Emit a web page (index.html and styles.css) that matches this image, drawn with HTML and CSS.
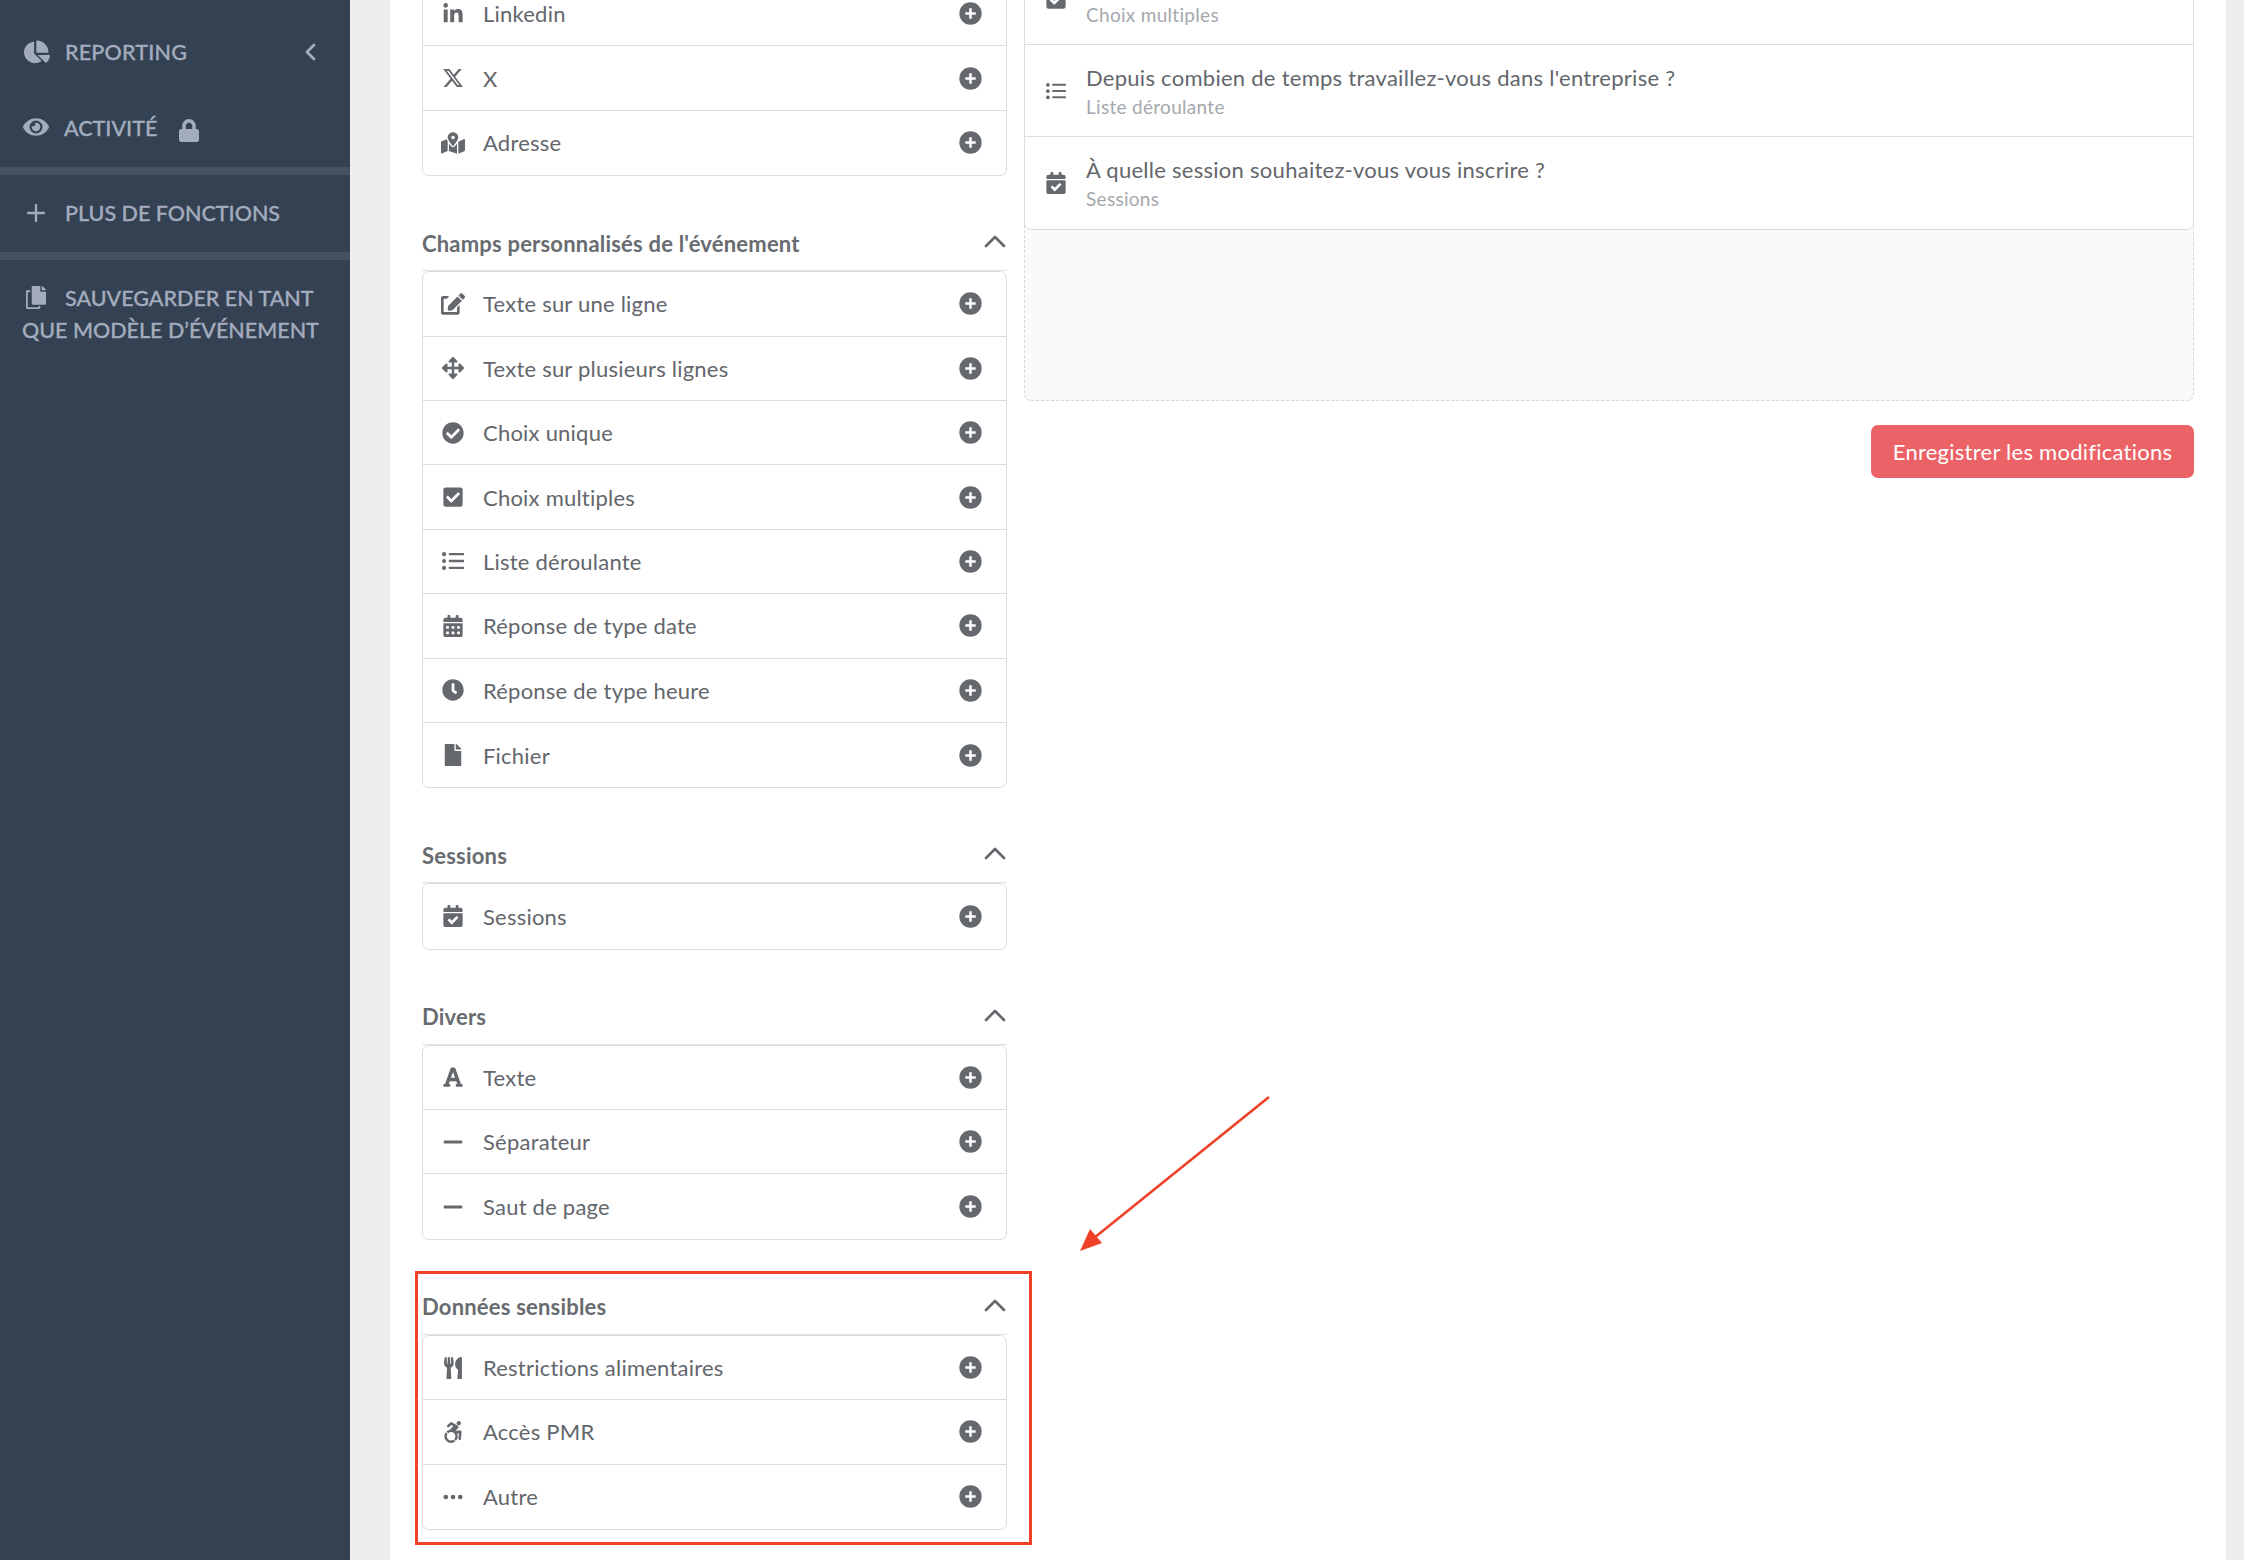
FILE: index.html
```html
<!DOCTYPE html>
<html lang="fr">
<head>
<meta charset="utf-8">
<title>Formulaire</title>
<link rel="stylesheet" href="styles.css">
</head>
<body>
<svg class="sprite" xmlns="http://www.w3.org/2000/svg">
<symbol id="i-plus" viewBox="0 0 512 512"><circle cx="256" cy="256" r="248"/><path class="cross" d="M228 140h56v88h88v56h-88v88h-56v-88h-88v-56h88z"/></symbol>
<symbol id="i-linkedin" viewBox="0 0 448 512"><path d="M100.28 448H7.4V148.9h92.88zM53.79 108.1C24.09 108.1 0 83.5 0 53.8a53.79 53.79 0 0 1 107.58 0c0 29.7-24.1 54.3-53.79 54.3zM447.9 448h-92.68V302.4c0-34.7-.7-79.2-48.29-79.2-48.29 0-55.69 37.7-55.69 76.7V448h-92.78V148.9h89.08v40.8h1.3c12.4-23.5 42.69-48.3 87.88-48.3 94 0 111.28 61.9 111.28 142.3V448z"/></symbol>
<symbol id="i-x" viewBox="0 0 512 512"><path d="M389.2 48h70.6L305.6 224.2 487 464H345L233.7 318.6 106.5 464H35.8L200.7 275.5 26.8 48H172.4L272.9 180.9 389.2 48zM364.4 421.8h39.1L151.1 88h-42L364.4 421.8z"/></symbol>
<symbol id="i-map" viewBox="0 0 576 512"><path d="M288 0c-69.59 0-126 56.41-126 126 0 56.26 82.35 158.8 113.9 196.02 6.39 7.54 17.82 7.54 24.2 0C331.65 284.8 414 182.26 414 126 414 56.41 357.59 0 288 0zm0 168c-23.2 0-42-18.8-42-42s18.8-42 42-42 42 18.8 42 42-18.8 42-42 42zM20.12 215.95A32.006 32.006 0 0 0 0 245.66v250.32c0 11.32 11.43 19.06 21.94 14.86L160 448V214.92c-8.84-15.98-16.07-31.54-21.25-46.42L20.12 215.95zM288 359.67c-14.07 0-27.38-6.18-36.51-16.96-19.66-23.2-40.57-49.62-59.49-76.72V448l192 64V266c-18.92 27.09-39.82 53.52-59.49 76.72-9.13 10.77-22.44 16.95-36.51 16.95zm266.06-198.51L416 224v288l139.88-55.95A31.996 31.996 0 0 0 576 426.34V176.02c0-11.32-11.43-19.06-21.94-14.86z"/></symbol>
<symbol id="i-edit" viewBox="0 0 576 512"><path d="M402.6 83.2l90.2 90.2c3.8 3.8 3.8 10 0 13.8L274.4 405.6l-92.8 10.3c-12.4 1.4-22.9-9.1-21.5-21.5l10.3-92.8L388.8 83.2c3.8-3.8 10-3.8 13.8 0zm162-22.9l-48.8-48.8c-15.2-15.2-39.9-15.2-55.2 0l-35.4 35.4c-3.8 3.8-3.8 10 0 13.8l90.2 90.2c3.8 3.8 10 3.8 13.8 0l35.4-35.4c15.2-15.3 15.2-40 0-55.2zM384 346.2V448H64V128h73.1c3.2 0 6.2-1.3 8.5-3.5l40-40c7.6-7.6 2.2-20.5-8.5-20.5H48C21.5 64 0 85.5 0 112v352c0 26.5 21.5 48 48 48h352c26.5 0 48-21.5 48-48V306.2c0-10.7-12.9-16-20.5-8.5l-40 40c-2.2 2.3-3.5 5.3-3.5 8.5z"/></symbol>
<symbol id="i-move" viewBox="0 0 512 512"><path d="M352.201 425.775l-79.196 79.196c-9.373 9.373-24.568 9.373-33.941 0l-79.196-79.196c-15.119-15.119-4.411-40.971 16.971-40.97h51.162L228 284H127.196v51.162c0 21.382-25.851 32.09-40.971 16.971L7.029 272.937c-9.373-9.373-9.373-24.569 0-33.941L86.225 159.8c15.119-15.119 40.971-4.411 40.971 16.971V228H228V127.196h-51.23c-21.382 0-32.09-25.851-16.971-40.971l79.196-79.196c9.373-9.373 24.568-9.373 33.941 0l79.196 79.196c15.119 15.119 4.411 40.971-16.971 40.971h-51.162V228h100.804v-51.162c0-21.382 25.851-32.09 40.97-16.971l79.196 79.196c9.373 9.373 9.373 24.569 0 33.941L425.773 352.2c-15.119 15.119-40.971 4.411-40.97-16.971V284H284v100.804h51.23c21.382 0 32.09 25.851 16.971 40.971z"/></symbol>
<symbol id="i-check-circle" viewBox="0 0 512 512"><path d="M504 256c0 136.967-111.033 248-248 248S8 392.967 8 256 119.033 8 256 8s248 111.033 248 248zM227.314 387.314l184-184c6.248-6.248 6.248-16.379 0-22.627l-22.627-22.627c-6.248-6.249-16.379-6.249-22.628 0L216 308.118l-70.059-70.059c-6.248-6.248-16.379-6.248-22.628 0l-22.627 22.627c-6.248 6.248-6.248 16.379 0 22.627l104 104c6.249 6.249 16.379 6.249 22.628.001z"/></symbol>
<symbol id="i-check-square" viewBox="0 0 448 512"><path d="M400 480H48c-26.51 0-48-21.49-48-48V80c0-26.51 21.49-48 48-48h352c26.51 0 48 21.49 48 48v352c0 26.51-21.49 48-48 48zm-204.686-98.059l184-184c6.248-6.248 6.248-16.379 0-22.627l-22.627-22.627c-6.248-6.248-16.379-6.249-22.628 0L184 302.745l-70.059-70.059c-6.248-6.248-16.379-6.248-22.628 0l-22.627 22.627c-6.248 6.248-6.248 16.379 0 22.627l104 104c6.249 6.25 16.379 6.25 22.628 0z"/></symbol>
<symbol id="i-list" viewBox="0 0 512 512"><circle cx="48" cy="96" r="48"/><circle cx="48" cy="256" r="48"/><circle cx="48" cy="416" r="48"/><rect x="160" y="68" width="352" height="56" rx="12"/><rect x="160" y="228" width="352" height="56" rx="12"/><rect x="160" y="388" width="352" height="56" rx="12"/></symbol>
<symbol id="i-cal" viewBox="0 0 448 512"><path d="M0 464c0 26.5 21.5 48 48 48h352c26.5 0 48-21.5 48-48V192H0v272zm320-196c0-6.6 5.4-12 12-12h40c6.6 0 12 5.4 12 12v40c0 6.6-5.4 12-12 12h-40c-6.6 0-12-5.4-12-12v-40zm0 128c0-6.6 5.4-12 12-12h40c6.6 0 12 5.4 12 12v40c0 6.6-5.4 12-12 12h-40c-6.6 0-12-5.4-12-12v-40zM192 268c0-6.6 5.4-12 12-12h40c6.6 0 12 5.4 12 12v40c0 6.6-5.4 12-12 12h-40c-6.6 0-12-5.4-12-12v-40zm0 128c0-6.6 5.4-12 12-12h40c6.6 0 12 5.4 12 12v40c0 6.6-5.4 12-12 12h-40c-6.6 0-12-5.4-12-12v-40zM64 268c0-6.6 5.4-12 12-12h40c6.6 0 12 5.4 12 12v40c0 6.6-5.4 12-12 12H76c-6.6 0-12-5.4-12-12v-40zm0 128c0-6.6 5.4-12 12-12h40c6.6 0 12 5.4 12 12v40c0 6.6-5.4 12-12 12H76c-6.6 0-12-5.4-12-12v-40zM400 64h-48V16c0-8.8-7.2-16-16-16h-32c-8.8 0-16 7.2-16 16v48H160V16c0-8.8-7.2-16-16-16h-32c-8.8 0-16 7.2-16 16v48H48C21.5 64 0 85.5 0 112v48h448v-48c0-26.5-21.5-48-48-48z"/></symbol>
<symbol id="i-clock" viewBox="0 0 512 512"><path d="M256,8C119,8,8,119,8,256S119,504,256,504,504,393,504,256,393,8,256,8Zm92.49,313h0l-20,25a16,16,0,0,1-22.49,2.5h0l-67-49.72a40,40,0,0,1-15-31.23V112a16,16,0,0,1,16-16h32a16,16,0,0,1,16,16V256l58,42.5A16,16,0,0,1,348.49,321Z"/></symbol>
<symbol id="i-file" viewBox="0 0 384 512"><path d="M224 136V0H24C10.7 0 0 10.7 0 24v464c0 13.3 10.7 24 24 24h336c13.3 0 24-10.7 24-24V160H248c-13.2 0-24-10.8-24-24zm160-14.1v6.1H256V0h6.1c6.4 0 12.5 2.5 17 7l97.9 98c4.5 4.5 7 10.6 7 16.9z"/></symbol>
<symbol id="i-calcheck" viewBox="0 0 448 512"><path d="M436 160H12c-6.627 0-12-5.373-12-12v-36c0-26.51 21.49-48 48-48h48V12c0-6.627 5.373-12 12-12h40c6.627 0 12 5.373 12 12v52h128V12c0-6.627 5.373-12 12-12h40c6.627 0 12 5.373 12 12v52h48c26.51 0 48 21.49 48 48v36c0 6.627-5.373 12-12 12zM12 192h424c6.627 0 12 5.373 12 12v260c0 26.51-21.49 48-48 48H48c-26.51 0-48-21.49-48-48V204c0-6.627 5.373-12 12-12zm333.296 95.947l-28.169-28.398c-4.667-4.705-12.265-4.736-16.97-.068L194.12 364.665l-45.98-46.352c-4.667-4.705-12.266-4.736-16.971-.068l-28.397 28.17c-4.705 4.667-4.736 12.265-.068 16.97l82.601 83.269c4.667 4.705 12.265 4.736 16.97.068l142.953-141.805c4.705-4.667 4.736-12.265.068-16.97z"/></symbol>
<symbol id="i-font" viewBox="0 0 448 512"><path d="M432 416h-23.41L277.88 53.69A32 32 0 0 0 247.58 32h-47.16a32 32 0 0 0-30.3 21.69L39.41 416H16a16 16 0 0 0-16 16v32a16 16 0 0 0 16 16h128a16 16 0 0 0 16-16v-32a16 16 0 0 0-16-16h-19.58l23.3-64h152.56l23.3 64H304a16 16 0 0 0-16 16v32a16 16 0 0 0 16 16h128a16 16 0 0 0 16-16v-32a16 16 0 0 0-16-16zM176.85 272L224 142.51 271.15 272z"/></symbol>
<symbol id="i-minus" viewBox="0 0 448 512"><rect x="8" y="220" width="432" height="72" rx="24"/></symbol>
<symbol id="i-utensils" viewBox="0 0 416 512"><path d="M207.9 15.2c.8 4.7 16.1 94.5 16.1 128.8 0 52.3-27.8 89.6-68.9 104.6L168 486.7c.7 13.7-10.2 25.3-24 25.3H80c-13.7 0-24.7-11.5-24-25.3l12.9-238.1C27.7 233.6 0 196.2 0 144 0 109.6 15.3 19.9 16.1 15.2 19.3-5.1 61.4-5.4 64 16.3v141.2c1.3 3.4 15.1 3.2 16 0 1.4-25.3 7.9-139.2 8-141.8 3.3-20.8 44.7-20.8 47.9 0 .2 2.7 6.6 116.5 8 141.8.9 3.2 14.8 3.4 16 0V16.3c2.6-21.6 44.8-21.4 48-1.1zm119.2 285.7l-15 185.1c-1.2 14 9.9 26 23.9 26h56c13.3 0 24-10.7 24-24V24c0-13.2-10.7-24-24-24-82.5 0-221.4 178.5-64.9 300.9z"/></symbol>
<symbol id="i-access" viewBox="0 0 448 512"><path d="M423.9 255.8L411 413.1c-3.3 40.7-63.9 35.1-60.6-4.9l10-122.5-41.1 2.3c10.1 20.7 15.8 43.9 15.8 68.5 0 41.2-16.1 78.7-42.3 106.5l-39.3-39.3c57.9-63.7 13.1-167.2-74-167.2-25.9 0-49.5 9.9-67.2 26L73 243.2c22-20.7 50.1-35.1 81.4-40.2l75.3-85.7-42.6-24.8-51.6 46c-30 26.8-70.6-18.5-40.5-45.4l68-60.7c9.8-8.8 24.1-10.2 35.5-3.6 0 0 139.3 80.9 139.5 81.1 16.2 10.1 20.7 36 6.1 52.6L285.7 229l106.1-5.9c18.5-1.1 33.6 14.4 32.1 32.7zm-64.9-154c28.1 0 50.9-22.8 50.9-50.9C409.9 22.8 387.1 0 359 0c-28.1 0-50.9 22.8-50.9 50.9 0 28.1 22.8 50.9 50.9 50.9zM179.6 456.5c-80.6 0-127.4-90.6-82.7-156.1l-39.7-39.7C36.4 287 24 320.3 24 356.4c0 130.7 150.7 201.4 251.4 122.5l-39.7-39.7c-16 10.9-35.3 17.3-56.1 17.3z"/></symbol>
<symbol id="i-dots" viewBox="0 0 512 512"><circle cx="72" cy="256" r="60"/><circle cx="256" cy="256" r="60"/><circle cx="440" cy="256" r="60"/></symbol>
<symbol id="i-chevron-up" viewBox="0 0 22 14"><path d="M2 12 L11 3 L20 12" fill="none" stroke="currentColor" stroke-width="2.7" stroke-linecap="round" stroke-linejoin="round"/></symbol>
<symbol id="i-chevron-left" viewBox="0 0 12 18"><path d="M10 2 L3 9 L10 16" fill="none" stroke="currentColor" stroke-width="2.8" stroke-linecap="round" stroke-linejoin="round"/></symbol>
<symbol id="i-pie" viewBox="0 0 576 512"><path d="M558.65 320H303.15l170.2 170.2c6.5 6.5 17.2 7 23.9.7 41.7-39.3 70.3-92.2 78.7-151.7 1.5-10.2-6.7-19.2-17.3-19.2zM543.9 256C535 115.2 426.8 7.4 291.6.5c-9.4-.5-17.6 7.2-17.6 16.6V272h253.1c9.4 0 17.4-6.6 16.8-16zM224 288V47.2c0-10.6-9-18.8-19.4-17.3C85.3 46.8-5.1 150.4.2 274.4c5.4 127.4 115.1 231.9 242.6 229.6 50.1-.9 96.4-17 134.5-43.7 7.9-5.5 8.4-17.2 1.6-24L224 288z"/></symbol>
<symbol id="i-eye" viewBox="0 0 576 512"><path d="M572.52 241.4C518.29 135.59 410.93 64 288 64S57.68 135.64 3.48 241.41a32.35 32.35 0 0 0 0 29.19C57.71 376.41 165.07 448 288 448s230.32-71.64 284.52-177.41a32.35 32.35 0 0 0 0-29.19zM288 400a144 144 0 1 1 144-144 143.93 143.93 0 0 1-144 144zm0-240a95.31 95.31 0 0 0-25.31 3.79 47.85 47.85 0 0 1-66.9 66.9A95.78 95.78 0 1 0 288 160z"/></symbol>
<symbol id="i-lock" viewBox="0 0 448 512"><path d="M400 224h-24v-72C376 68.2 307.8 0 224 0S72 68.2 72 152v72H48c-26.5 0-48 21.5-48 48v192c0 26.5 21.5 48 48 48h352c26.5 0 48-21.5 48-48V272c0-26.5-21.5-48-48-48zm-104 0H152v-72c0-39.7 32.3-72 72-72s72 32.3 72 72v72z"/></symbol>
<symbol id="i-sideplus" viewBox="0 0 18 18"><path d="M9 1v16M1 9h16" fill="none" stroke="currentColor" stroke-width="2.4" stroke-linecap="round"/></symbol>
<symbol id="i-copy" viewBox="0 0 448 512"><path d="M320 448v40c0 13.255-10.745 24-24 24H24c-13.255 0-24-10.745-24-24V120c0-13.255 10.745-24 24-24h72v40H40v336h240v-24h40zm0-344V0H152c-13.255 0-24 10.745-24 24v368c0 13.255 10.745 24 24 24h272c13.255 0 24-10.745 24-24V128H344c-13.2 0-24-10.8-24-24zm120.971-31.029L375.029 7.029A24 24 0 0 0 358.059 0H352v96h96v-6.059a24 24 0 0 0-7.029-16.97z"/></symbol>
</svg>

<div class="app">
  <nav class="sidebar">
    <div class="nav-top">
      <a class="nav-item nav-reporting"><svg class="nav-icon pie"><use href="#i-pie"/></svg><span class="nav-label">REPORTING</span><svg class="nav-chevron"><use href="#i-chevron-left"/></svg></a>
      <a class="nav-item nav-activity"><svg class="nav-icon eye"><use href="#i-eye"/></svg><span class="nav-label">ACTIVITÉ</span><svg class="nav-lock"><use href="#i-lock"/></svg></a>
    </div>
    <div class="nav-block"><a class="nav-item"><svg class="nav-icon plus"><use href="#i-sideplus"/></svg><span class="nav-label">PLUS DE FONCTIONS</span></a></div>
    <div class="nav-block nav-save"><svg class="copy"><use href="#i-copy"/></svg><span class="save-first">SAUVEGARDER EN TANT</span><br>QUE MODÈLE D’ÉVÉNEMENT</div>
  </nav>

  <main class="content">
    <div class="palette">
      <ul class="field-list">
        <li class="field"><svg class="field-icon"><use href="#i-linkedin"/></svg><span class="field-name">Linkedin</span><svg class="add"><use href="#i-plus"/></svg></li>
        <li class="field"><svg class="field-icon"><use href="#i-x"/></svg><span class="field-name">X</span><svg class="add"><use href="#i-plus"/></svg></li>
        <li class="field"><svg class="field-icon"><use href="#i-map"/></svg><span class="field-name">Adresse</span><svg class="add"><use href="#i-plus"/></svg></li>
      </ul>

      <section class="group">
        <header class="group-head"><h2>Champs personnalisés de l'événement</h2><svg class="collapse"><use href="#i-chevron-up"/></svg></header>
        <ul class="field-list">
          <li class="field"><svg class="field-icon"><use href="#i-edit"/></svg><span class="field-name">Texte sur une ligne</span><svg class="add"><use href="#i-plus"/></svg></li>
          <li class="field"><svg class="field-icon"><use href="#i-move"/></svg><span class="field-name">Texte sur plusieurs lignes</span><svg class="add"><use href="#i-plus"/></svg></li>
          <li class="field"><svg class="field-icon"><use href="#i-check-circle"/></svg><span class="field-name">Choix unique</span><svg class="add"><use href="#i-plus"/></svg></li>
          <li class="field"><svg class="field-icon"><use href="#i-check-square"/></svg><span class="field-name">Choix multiples</span><svg class="add"><use href="#i-plus"/></svg></li>
          <li class="field"><svg class="field-icon"><use href="#i-list"/></svg><span class="field-name">Liste déroulante</span><svg class="add"><use href="#i-plus"/></svg></li>
          <li class="field"><svg class="field-icon"><use href="#i-cal"/></svg><span class="field-name">Réponse de type date</span><svg class="add"><use href="#i-plus"/></svg></li>
          <li class="field"><svg class="field-icon"><use href="#i-clock"/></svg><span class="field-name">Réponse de type heure</span><svg class="add"><use href="#i-plus"/></svg></li>
          <li class="field"><svg class="field-icon"><use href="#i-file"/></svg><span class="field-name">Fichier</span><svg class="add"><use href="#i-plus"/></svg></li>
        </ul>
      </section>

      <section class="group">
        <header class="group-head"><h2>Sessions</h2><svg class="collapse"><use href="#i-chevron-up"/></svg></header>
        <ul class="field-list">
          <li class="field"><svg class="field-icon"><use href="#i-calcheck"/></svg><span class="field-name">Sessions</span><svg class="add"><use href="#i-plus"/></svg></li>
        </ul>
      </section>

      <section class="group">
        <header class="group-head"><h2>Divers</h2><svg class="collapse"><use href="#i-chevron-up"/></svg></header>
        <ul class="field-list">
          <li class="field"><svg class="field-icon"><use href="#i-font"/></svg><span class="field-name">Texte</span><svg class="add"><use href="#i-plus"/></svg></li>
          <li class="field"><svg class="field-icon"><use href="#i-minus"/></svg><span class="field-name">Séparateur</span><svg class="add"><use href="#i-plus"/></svg></li>
          <li class="field"><svg class="field-icon"><use href="#i-minus"/></svg><span class="field-name">Saut de page</span><svg class="add"><use href="#i-plus"/></svg></li>
        </ul>
      </section>

      <section class="group">
        <header class="group-head"><h2>Données sensibles</h2><svg class="collapse"><use href="#i-chevron-up"/></svg></header>
        <ul class="field-list">
          <li class="field"><svg class="field-icon"><use href="#i-utensils"/></svg><span class="field-name">Restrictions alimentaires</span><svg class="add"><use href="#i-plus"/></svg></li>
          <li class="field"><svg class="field-icon"><use href="#i-access"/></svg><span class="field-name">Accès PMR</span><svg class="add"><use href="#i-plus"/></svg></li>
          <li class="field"><svg class="field-icon dots"><use href="#i-dots"/></svg><span class="field-name">Autre</span><svg class="add"><use href="#i-plus"/></svg></li>
        </ul>
      </section>
    </div>

    <div class="form-column">
      <div class="dropzone">
        <ul class="question-list">
          <li class="question"><svg class="question-icon"><use href="#i-check-square"/></svg><div class="question-text question-text-scrolled"><p class="question-type">Choix multiples</p></div></li>
          <li class="question"><svg class="question-icon"><use href="#i-list"/></svg><div class="question-text"><p class="question-title">Depuis combien de temps travaillez-vous dans l'entreprise ?</p><p class="question-type">Liste déroulante</p></div></li>
          <li class="question"><svg class="question-icon"><use href="#i-calcheck"/></svg><div class="question-text"><p class="question-title">À quelle session souhaitez-vous vous inscrire ?</p><p class="question-type">Sessions</p></div></li>
        </ul>
      </div>
      <div class="actions"><button class="save-button" type="button">Enregistrer les modifications</button></div>
    </div>
  </main>
</div>

<div class="highlight-box"></div>
<svg class="annotation-arrow" viewBox="0 0 200 170"><line x1="197" y1="1" x2="22" y2="142" stroke="#ee4128" stroke-width="2.6"/><polygon points="8,155 18,133 30,147" fill="#ee4128"/></svg>
</body>
</html>
```

FILE: styles.css
```css
* { box-sizing: border-box; }
html, body { margin: 0; height: 1560px; overflow: hidden; }
body { background: #eeeeee; font-family: "Lato", "Liberation Sans", sans-serif; color: #63666b; position: relative; }
ul { list-style: none; margin: 0; padding: 0; }
p, h2 { margin: 0; }
.sprite { position: absolute; width: 0; height: 0; }
.cross { fill: #ffffff; }
.app { display: flex; height: 1560px; overflow: hidden; }

/* Sidebar */
.sidebar { width: 350px; flex: none; background: #344152; color: #a3acbe; font-size: 21.5px; font-weight: 500; -webkit-text-stroke: 0.3px #a3acbe; }
.nav-top { height: 167px; padding-top: 26px; }
.nav-item { display: flex; align-items: center; height: 52px; padding-left: 65px; position: relative; }
.nav-reporting { margin-bottom: 24px; letter-spacing: 0.2px; }
.nav-activity { padding-left: 64px; }
.nav-icon { position: absolute; fill: currentColor; color: inherit; }
.pie { left: 24px; top: 14px; width: 26px; height: 24px; }
.eye { left: 23px; top: 13px; width: 26px; height: 24px; }
.plus { left: 27px; top: 17px; width: 18px; height: 18px; }
.nav-chevron { width: 12px; height: 18px; margin-left: auto; margin-right: 34px; }
.nav-lock { width: 20px; height: 23px; margin-left: 22px; margin-top: 4px; fill: currentColor; }
.nav-block { border-top: 8px solid #445261; height: 85px; padding-top: 12px; }
.nav-save { height: auto; padding: 22px 0 0 22px; line-height: 32px; position: relative; }
.copy { position: absolute; left: 26px; top: 26px; width: 20px; height: 23px; fill: currentColor; }
.save-first { margin-left: 43px; }

/* Main */
.content { width: 1836px; flex: none; margin-left: 40px; background: #ffffff; display: flex; align-items: flex-start; padding-left: 32px; gap: 17px; overflow: hidden; height: 1560px; }
.palette { width: 585px; flex: none; margin-top: -19px; }
.field-list { border: 1px solid #dcdcdc; border-radius: 7px; background: #fff; }
.field { display: flex; align-items: center; height: 64.4px; border-bottom: 1px solid #dcdcdc; padding: 0 24px 0 18px; font-size: 22px; letter-spacing: 0.22px; }
.field:last-child { border-bottom: 0; }
.field-icon { width: 24px; height: 22px; flex: none; fill: #65686d; }
.dots { height: 20px; }
.field-name { margin-left: 18px; flex: 1; color: #63666b; }
.add { width: 23px; height: 23px; flex: none; fill: #65686d; }
.group-head { display: flex; align-items: center; justify-content: space-between; height: 95px; padding-top: 40px; padding-right: 1px; border-bottom: 1px solid #e4e4e4; }
.group-head h2 { font-size: 22px; font-weight: 700; letter-spacing: 0.2px; color: #686b70; }
.collapse { width: 22px; height: 14px; color: #63666b; margin-top: -4px; }

/* Form column */
.form-column { width: 1170px; flex: none; margin-top: -48px; }
.dropzone { height: 449px; background: #f9fafc; border: 1px dashed #d8d8d8; border-top: 0; border-radius: 0 0 7px 7px; }
.question-list { background: #fff; border: 1px solid #dcdcdc; border-radius: 0 0 7px 7px; margin: 0 -1px; }
.question { display: flex; align-items: center; height: 92px; border-bottom: 1px solid #dcdcdc; padding-left: 21px; }
.question:last-child { border-bottom: 0; }
.question-icon { width: 20px; height: 22px; flex: none; fill: #65686d; }
.question-text { margin-left: 20px; }
.question-text-scrolled { padding-top: 30px; }
.question-title { font-size: 22px; letter-spacing: 0.27px; line-height: 30px; color: #63666b; }
.question-type { font-size: 19px; letter-spacing: 0.3px; line-height: 24px; color: #a5a8ac; margin-top: 2px; }
.actions { display: flex; justify-content: flex-end; margin-top: 24px; }
.save-button { width: 323px; height: 53px; background: #ec6367; color: #fff; border: 0; border-radius: 7px; font: inherit; font-size: 22px; letter-spacing: 0.25px; }

/* Annotations drawn over the capture */
.highlight-box { position: absolute; left: 415px; top: 1271px; width: 617px; height: 274px; border: 3px solid #ee4128; }
.annotation-arrow { position: absolute; left: 1072px; top: 1096px; width: 200px; height: 170px; }
```
